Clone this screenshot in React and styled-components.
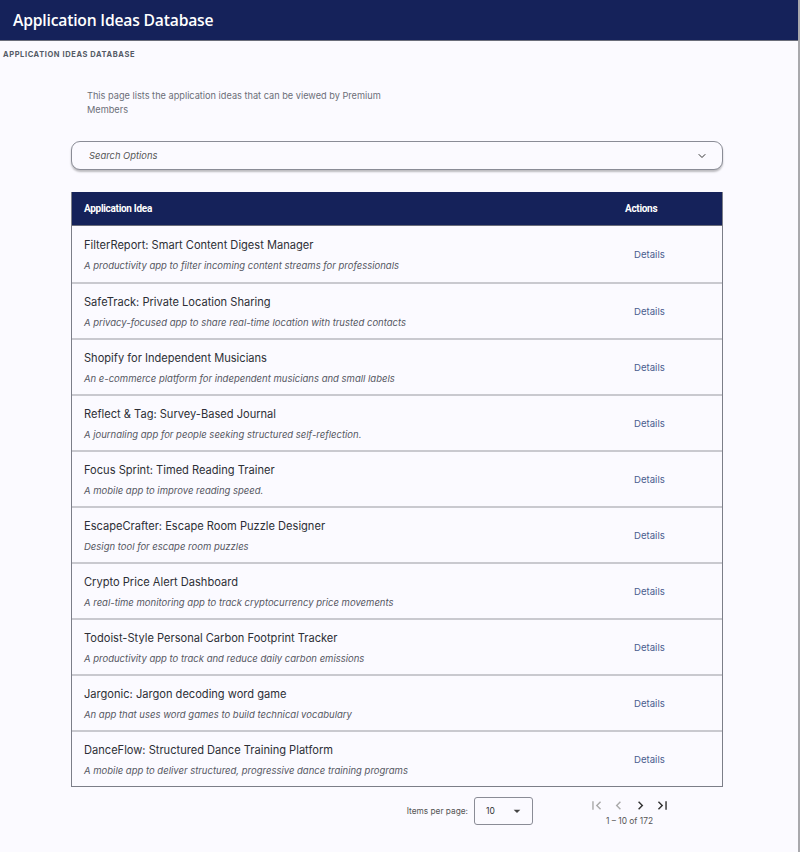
import styled, { createGlobalStyle } from "styled-components";
import { FiChevronDown } from "react-icons/fi";
import { MdFirstPage, MdLastPage, MdChevronLeft, MdChevronRight, MdArrowDropDown } from "react-icons/md";

const GlobalStyle = createGlobalStyle`
  html, body {
    margin: 0;
    padding: 0;
    background: #fbfaff;
  }
  body {
    font-family: Inter, "Noto Sans", sans-serif;
    color: #333;
  }
`;

const Page = styled.div`
  min-height: 852px;
  box-sizing: border-box;
  border-right: 2px solid #a9a9ad;
  background: #fbfaff;
`;

const TopBar = styled.header`
  height: 41px;
  background: #15225a;
  display: flex;
  align-items: center;
  padding-left: 13px;
  border-bottom: 1px solid #6a6d7a;
  box-sizing: border-box;
`;

const TopTitle = styled.h1`
  margin: 0;
  font-family: "Open Sans", Lato, sans-serif;
  font-weight: 600;
  font-size: 15.7px;
  letter-spacing: -0.2px;
  color: #fff;
`;

const Crumb = styled.div`
  padding: 9px 0 0 3px;
  font-size: 7.5px;
  font-weight: 700;
  letter-spacing: 0.6px;
  color: #555a66;
  text-transform: uppercase;
`;

const Content = styled.main`
  width: 652px;
  margin: 0 0 0 71px;
  display: flex;
  flex-direction: column;
`;

const Intro = styled.p`
  margin: 30px 0 0 16px;
  width: 320px;
  font-size: 9.2px;
  line-height: 14px;
  color: #6b6e78;
`;

const SearchBox = styled.div`
  margin-top: 24px;
  height: 29px;
  box-sizing: border-box;
  border: 1px solid #8a8c96;
  border-radius: 9px;
  box-shadow: 0 2px 2px rgba(0, 0, 0, 0.25);
  display: flex;
  align-items: center;
  justify-content: space-between;
  padding: 0 14px 0 17px;
  font-size: 9.4px;
  font-style: italic;
  color: #555;
  background: #fbfaff;
`;

const Table = styled.div`
  margin-top: 22px;
  border: 1px solid #7c7e88;
  border-top: none;
`;

const HeadRow = styled.div`
  height: 34px;
  box-sizing: border-box;
  background: #15225a;
  display: grid;
  grid-template-columns: 1fr 97px;
  align-items: center;
  color: #fff;
  font-family: Roboto, sans-serif;
  font-weight: 700;
  font-size: 10px;
  letter-spacing: -0.3px;
  padding-left: 12px;
  border-bottom: 1px solid #6a6d7a;
`;

const Row = styled.div`
  height: 56px;
  box-sizing: border-box;
  display: grid;
  grid-template-columns: 1fr 97px;
  align-items: center;
  padding-left: 12px;
  border-top: ${(p) => (p.$first ? "none" : "2px solid #c9c9cf")};
`;

const IdeaText = styled.div`
  display: flex;
  flex-direction: column;
  gap: 8px;
`;

const IdeaTitle = styled.div`
  font-size: 11.1px;
  color: #2d2f36;
`;

const IdeaBlurb = styled.div`
  font-size: 9.5px;
  font-style: italic;
  color: #55575f;
`;

const DetailsLink = styled.a`
  font-size: 9.6px;
  color: #4a5d8e;
  padding-left: 9px;
  cursor: pointer;
`;

const Pager = styled.div`
  display: flex;
  align-items: flex-start;
  justify-content: flex-end;
  padding: 10px 52px 0 0;
  gap: 55px;
`;

const PerPage = styled.div`
  display: flex;
  align-items: center;
  gap: 6px;
  font-size: 8.3px;
  color: #555;
`;

const PerSelect = styled.div`
  width: 59px;
  height: 28px;
  box-sizing: border-box;
  border: 1px solid #8a8c96;
  border-radius: 3px;
  display: flex;
  align-items: center;
  justify-content: space-between;
  padding: 0 7px 0 11px;
  font-size: 8.5px;
  color: #333;
`;

const NavBlock = styled.div`
  display: flex;
  flex-direction: column;
  align-items: center;
  gap: 2px;
`;

const NavIcons = styled.div`
  display: flex;
  gap: 5px;
  color: #333;
`;

const NavButton = styled.span`
  display: flex;
  color: ${(p) => (p.$off ? "#aaa" : "#333")};
`;

const RangeText = styled.div`
  font-size: 8.4px;
  color: #555;
`;

const ideas = [
  ["FilterReport: Smart Content Digest Manager", "A productivity app to filter incoming content streams for professionals"],
  ["SafeTrack: Private Location Sharing", "A privacy-focused app to share real-time location with trusted contacts"],
  ["Shopify for Independent Musicians", "An e-commerce platform for independent musicians and small labels"],
  ["Reflect & Tag: Survey-Based Journal", "A journaling app for people seeking structured self-reflection."],
  ["Focus Sprint: Timed Reading Trainer", "A mobile app to improve reading speed."],
  ["EscapeCrafter: Escape Room Puzzle Designer", "Design tool for escape room puzzles"],
  ["Crypto Price Alert Dashboard", "A real-time monitoring app to track cryptocurrency price movements"],
  ["Todoist-Style Personal Carbon Footprint Tracker", "A productivity app to track and reduce daily carbon emissions"],
  ["Jargonic: Jargon decoding word game", "An app that uses word games to build technical vocabulary"],
  ["DanceFlow: Structured Dance Training Platform", "A mobile app to deliver structured, progressive dance training programs"],
];

export default function App() {
  return (
    <Page>
      <GlobalStyle />
      <TopBar>
        <TopTitle>Application Ideas Database</TopTitle>
      </TopBar>
      <Crumb>Application Ideas Database</Crumb>
      <Content>
        <Intro>This page lists the application ideas that can be viewed by Premium Members</Intro>
        <SearchBox>
          <span>Search Options</span>
          <FiChevronDown size={12} color="#333" />
        </SearchBox>
        <Table>
          <HeadRow>
            <span>Application Idea</span>
            <span>Actions</span>
          </HeadRow>
          {ideas.map(([title, blurb], i) => (
            <Row key={title} $first={i === 0}>
              <IdeaText>
                <IdeaTitle>{title}</IdeaTitle>
                <IdeaBlurb>{blurb}</IdeaBlurb>
              </IdeaText>
              <DetailsLink>Details</DetailsLink>
            </Row>
          ))}
        </Table>
        <Pager>
          <PerPage>
            Items per page:
            <PerSelect>
              10
              <MdArrowDropDown size={16} color="#444" />
            </PerSelect>
          </PerPage>
          <NavBlock>
            <NavIcons>
              <NavButton $off><MdFirstPage size={17} /></NavButton>
              <NavButton $off><MdChevronLeft size={17} /></NavButton>
              <NavButton><MdChevronRight size={17} /></NavButton>
              <NavButton><MdLastPage size={17} /></NavButton>
            </NavIcons>
            <RangeText>1 – 10 of 172</RangeText>
          </NavBlock>
        </Pager>
      </Content>
    </Page>
  );
}
